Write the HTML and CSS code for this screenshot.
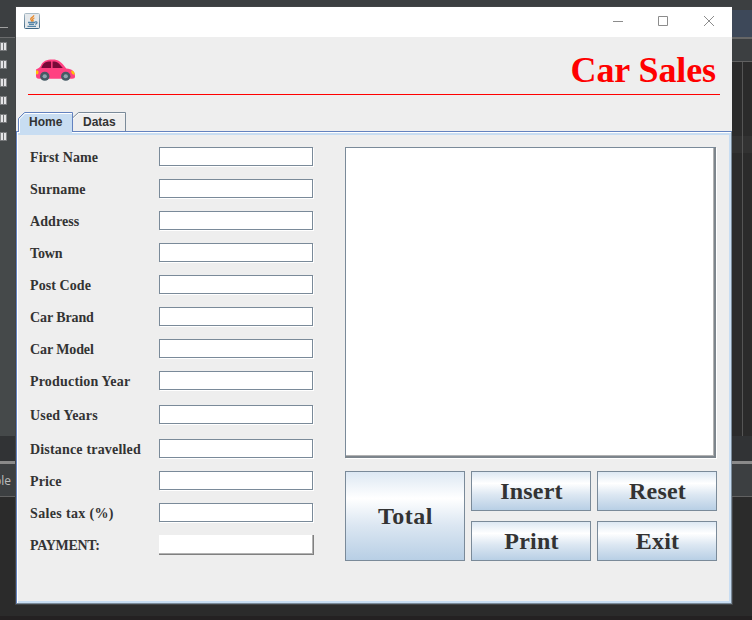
FILE: index.html
```html
<!DOCTYPE html>
<html lang="en">
<head>
<meta charset="utf-8">
<title>Car Sales</title>
<link rel="stylesheet" href="styles.css">
</head>
<body>
<aside class="edge left">
  <div class="left-top"><i></i></div>
  <div class="gutter"><b></b><b></b><b></b><b></b><b></b><b></b></div>
  <div class="status"></div>
  <div class="console-tab"><span>ble</span></div>
</aside>
<main class="window">
  <header class="titlebar">
    <svg class="java" width="16" height="16" viewBox="0 0 16 16" fill="none">
      <defs><linearGradient id="jg" x2="0" y2="1"><stop stop-color="#a9bac5"/><stop offset="1" stop-color="#3f6785"/></linearGradient></defs>
      <rect x=".5" y=".5" width="15" height="15" rx="1" fill="#e4e8eb" stroke="url(#jg)"/>
      <path d="M9.800 2.200C10 4 6.300 4.700 6.700 6.200c.2 1 1.300 1.400 1.200 2.500M10.500 5C8.500 5.600 8.200 6.300 9 7.200c.4.6.1 1-.3 1.500" stroke="#e8892b" stroke-width="1.300"/>
      <path d="M4 9.500h7M5 11.300h5M3.500 13.300h8.500M11 9c2.500-.7 2.700 1.500.2 2.300" stroke="#5585a8" stroke-width="1.300"/>
    </svg>
    <svg class="controls" width="104" height="12" viewBox="0 0 104 12" fill="none" stroke="#8c8c8c">
      <path d="M0 6.500h10M45.500 1.500h9v9h-9zM91 1l10 10M101 1 91 11"/>
    </svg>
  </header>
  <section class="banner">
    <svg class="car" width="41" height="23" viewBox="0 0 42 24" preserveAspectRatio="none">
      <path d="M1 11C3 10 5 9 6 7c2-5 6-6.500 12-6.500 6 0 9 2.500 14 9.500 6 .5 9 3 9 8 0 2-1 2.500-3 2.500H4c-2 0-3-1-3-3z" fill="#ff4081"/>
      <path d="M6.500 9.500C8 4.500 10 2.500 16.500 2.500v7zM18 2.500c5 0 7 2 10.500 7H18z" fill="#780a39"/>
      <path d="M1 12h1.500c1.500 0 1.500 4 0 4H1zM37 12c3 .5 4 2 3.500 4.500-2 0-3.500-1.500-3.500-4.500z" fill="#ffc107"/>
      <g fill="#455a64"><circle cx="10" cy="18" r="4.800"/><circle cx="31.500" cy="18" r="4.800"/></g>
      <g fill="#90a4ae"><circle cx="10" cy="18" r="2.200"/><circle cx="31.500" cy="18" r="2.200"/></g>
    </svg>
    <h1>Car Sales</h1>
  </section>
  <nav class="tabs">
    <div class="tab active"><svg width="55" height="22" viewBox="0 0 55 22"><path d="M.5 20V6.500l6-6h48V20" fill="#c8ddf2" stroke="#6382bf"/><path d="M1.500 20V7l5.500-5.500h47" fill="none" stroke="#fff"/><path d="M2 19h52v3H2z" fill="#c8ddf2"/></svg><span>Home</span></div>
    <div class="tab"><svg width="54" height="20" viewBox="0 0 54 20"><path d="M0 5.500 5.500.5h47V20" fill="none" stroke="#7a8a99"/><path d="M0 7l6-5.500h46" fill="none" stroke="#fff" opacity=".7"/></svg><span>Datas</span></div>
  </nav>
  <section class="pane">
    <form class="fields">
      <label><span>First Name</span><input></label>
      <label><span class="wide">Surname</span><input></label>
      <label><span>Address</span><input></label>
      <label><span class="tight">Town</span><input></label>
      <label><span>Post Code</span><input></label>
      <label><span class="tight">Car Brand</span><input></label>
      <label><span class="tight">Car Model</span><input></label>
      <label class="spaced"><span class="wide">Production Year</span><input></label>
      <label class="spaced"><span class="wide">Used Years</span><input></label>
      <label><span class="wide">Distance travelled</span><input></label>
      <label><span>Price</span><input></label>
      <label><span class="wider">Sales tax (%)</span><input></label>
      <label><span class="payment">PAYMENT:</span><input class="raised"></label>
    </form>
    <div class="output">
      <div class="receipt"></div>
      <div class="buttons">
        <button class="total">Total</button>
        <button>Insert</button>
        <button>Reset</button>
        <button>Print</button>
        <button>Exit</button>
      </div>
    </div>
  </section>
</main>
<aside class="edge right">
  <div class="right-top"></div>
  <div class="toolbar"></div>
  <div class="editor"></div>
  <div class="status"></div>
  <div class="console-tab"></div>
</aside>
</body>
</html>
```
FILE: styles.css
```css
* { box-sizing: border-box; }
body {
  margin: 0;
  width: 752px;
  height: 620px;
  overflow: hidden;
  display: grid;
  grid-template-columns: 16px 716px 20px;
  background: linear-gradient(#3c3f41 0 7px, #2b2b2b 7px 616px, #242122 616px);
}
.edge { display: flex; flex-direction: column; overflow: hidden; }
.left-top { height: 38px; background: #3c3f41; border-bottom: 1px solid #6a6b6c; padding-top: 27px; }
.left-top i { display: block; width: 8px; height: 1px; background: #a0a0a0; }
.gutter { height: 398px; background: #45494a; padding-top: 4px; display: flex; flex-direction: column; gap: 9px; }
.gutter b {
  width: 7px;
  height: 9px;
  background: linear-gradient(90deg, #858788 0 1px, #e4e4e6 1px 3px, #707274 3px 4px, #e4e4e6 4px 6px, #858788 6px);
  border: solid #77797b;
  border-width: 1px 0;
}
.status { height: 25px; background: #313335; }
.console-tab {
  height: 36px;
  background: #3c3f41;
  border-top: 3px solid #8a8a8a;
  border-bottom: 1px solid #616161;
  color: #bbb;
  font: 12px/33px "Open Sans", sans-serif;
}
.console-tab span { display: block; margin-left: -6px; }
.right-top { height: 39px; background: linear-gradient(#3c3f41 0 10px, #3d4859 10px); border-bottom: 2px solid #666; }
.toolbar { height: 23px; background: #3c3f41; border-bottom: 1px solid #616161; }
.editor {
  height: 374px;
  background:
    linear-gradient(90deg, transparent 10px, #555 10px 11px, transparent 11px),
    linear-gradient(#2b2b2b 0 74px, #323232 74px 91px, #2b2b2b 91px);
}
.window { margin-top: 7px; height: 597px; background: #eee; display: flex; flex-direction: column; box-shadow: 0 0 0 1px #424446; }
.titlebar { height: 30px; background: #fff; display: flex; justify-content: space-between; padding: 6px 13px 0 8px; }
.controls { margin-top: 2px; margin-right: 2px; }
.banner {
  height: 58px;
  margin: 0 12px;
  border-bottom: 1px solid #f00;
  display: flex;
  justify-content: space-between;
  padding: 22px 4px 0 7px;
}
h1 { margin: -10px 0 0; font: bold 36px/42px "Liberation Serif", serif; letter-spacing: -.1px; color: #f00; }
.tabs { height: 36px; padding: 17px 0 0 2px; display: flex; }
.tab { display: grid; height: 20px; font: bold 12px/20px "Liberation Sans", sans-serif; color: #333; }
.tab > * { grid-area: 1 / 1; }
.tab span { padding-left: 10px; }
.tab.active { position: relative; z-index: 1; height: 22px; }
.tab.active span { padding-left: 11px; }
.pane {
  flex: 1;
  display: flex;
  gap: 32px;
  padding: 13px 13px 0 12px;
  border: 1px solid;
  border-color: #6382bf #7a8a99 #7a8a99 #6382bf;
  box-shadow: inset 1px 1px #fff, inset 0 3px #c8ddf2, inset -2px -2px #c8ddf2;
}
.fields { width: 284px; padding-top: 2px; padding-left: 1px; display: flex; flex-direction: column; }
label { height: 32px; display: flex; font: bold 14px/22px "Liberation Serif", serif; color: #333; white-space: nowrap; }
label.spaced { height: 34px; }
label span { flex: none; width: 129px; letter-spacing: .08px; }
label .wide { letter-spacing: .18px; }
label .wider { letter-spacing: .35px; }
label .tight { letter-spacing: -.1px; }
label .payment { letter-spacing: -.3px; }
input {
  display: block;
  flex: none;
  width: 154px;
  height: 19px;
  margin: 0;
  padding: 0;
  background: #fff;
  border: 1px solid #7a8a99;
  border-radius: 0;
  box-shadow: 1px 1px #fff;
}
.raised { width: 155px; height: 20px; border: solid #808080; border-width: 0 1px 1px 0; box-shadow: inset -1px -1px #b2b2b2; }
.output { width: 372px; padding-top: 2px; }
.receipt {
  width: 371px;
  height: 311px;
  background: #fff;
  border: solid #7a8a99;
  border-width: 1px 2px 2px 1px;
  border-right-color: #7d858c;
  border-bottom-color: #7d858c;
  box-shadow: inset -1px -1px #b2b2b2, 1px 1px #fff;
}
.buttons { margin-top: 13px; display: grid; grid-template: 40px 40px / repeat(3, 120px); gap: 10px 6px; }
.total { grid-row: 1 / 3; }
button {
  padding: 0 0 0 1px;
  border: 1px solid #7a8a99;
  border-radius: 0;
  background: linear-gradient(#dde8f3, #fff 30%, #dce7f2 60%, #b8cfe5);
  font: bold 24px/30px "Liberation Serif", serif;
  letter-spacing: .2px;
  color: #333;
}
.total { letter-spacing: .5px; }
```
